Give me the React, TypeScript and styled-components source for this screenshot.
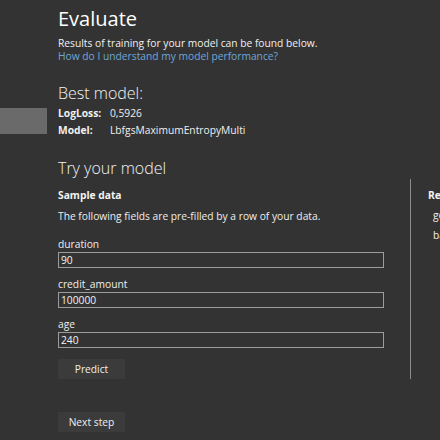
import React from "react";
import styled, { createGlobalStyle } from "styled-components";

const GlobalStyle = createGlobalStyle`
  html, body {
    margin: 0;
    padding: 0;
    background: #333333;
    overflow: hidden;
  }
  body {
    font-family: "Open Sans", "Noto Sans", sans-serif;
    color: #f2f2f2;
  }
`;

const fields = [
  { name: "duration", value: "90" },
  { name: "credit_amount", value: "100000" },
  { name: "age", value: "240" },
];

const App = () => {
  return (
    <>
      <GlobalStyle />
      <Page>
        <Sidebar>
          <NavItem $selected />
        </Sidebar>
        <Main>
          <Title>Evaluate</Title>
          <Body>Results of training for your model can be found below.</Body>
          <Link>How do I understand my model performance?</Link>

          <SubTitle $top={19}>Best model:</SubTitle>
          <Metrics>
            <MetricLabel>LogLoss:</MetricLabel>
            <Body>0,5926</Body>
            <MetricLabel>Model:</MetricLabel>
            <Body>LbfgsMaximumEntropyMulti</Body>
          </Metrics>

          <SubTitle $top={20}>Try your model</SubTitle>
          <Columns>
            <Form>
              <Strong>Sample data</Strong>
              <Note>The following fields are pre-filled by a row of your data.</Note>
              <Fields>
                {fields.map((f) => (
                  <Field key={f.name}>
                    <FieldLabel>{f.name}</FieldLabel>
                    <Input defaultValue={f.value} />
                  </Field>
                ))}
              </Fields>
              <Button>Predict</Button>
            </Form>
            <Divider />
            <Results>
              <Strong>Results</Strong>
              <ResultRow>good</ResultRow>
              <ResultRow>bad</ResultRow>
            </Results>
          </Columns>
          <NextButton>Next step</NextButton>
        </Main>
      </Page>
    </>
  );
};

const Page = styled.div`
  display: flex;
  width: 440px;
  height: 440px;
  background: #333333;
  overflow: hidden;
`;

const Sidebar = styled.div`
  width: 47px;
  flex-shrink: 0;
  display: flex;
  flex-direction: column;
  padding-top: 108px;
`;

const NavItem = styled.div<{ $selected: boolean }>`
  height: 26px;
  background: ${(p) => (p.$selected ? "#6a6a6a" : "transparent")};
`;

const Main = styled.div`
  flex: 1;
  display: flex;
  flex-direction: column;
  padding: 6px 0 0 11px;
  min-width: 0;
`;

const Title = styled.h1`
  margin: 0 0 5px;
  font-size: 20px;
  line-height: 26px;
  font-weight: 400;
  color: #ffffff;
`;

const Body = styled.div`
  font-size: 10.25px;
  line-height: 13px;
  color: #f0f0f0;
  white-space: nowrap;
`;

const Link = styled.a`
  font-size: 10.25px;
  line-height: 13px;
  color: #6ea6d8;
  white-space: nowrap;
  cursor: pointer;
`;

const SubTitle = styled.h2<{ $top: number }>`
  margin: ${(p) => p.$top}px 0 0;
  font-size: 16px;
  line-height: 22px;
  font-weight: 300;
  color: #f4f4f4;
`;

const Metrics = styled.div`
  display: grid;
  grid-template-columns: 52px auto;
  row-gap: 4px;
  margin-top: 3px;
  justify-items: start;
`;

const MetricLabel = styled.div`
  font-size: 10.25px;
  line-height: 13px;
  font-weight: 700;
  color: #f0f0f0;
`;

const Columns = styled.div`
  display: flex;
  align-items: stretch;
`;

const Form = styled.div`
  width: 326px;
  flex-shrink: 0;
  display: flex;
  flex-direction: column;
  align-items: flex-start;
  padding-top: 9px;
`;

const Strong = styled.div`
  font-size: 10.25px;
  line-height: 14px;
  font-weight: 700;
  color: #f2f2f2;
  white-space: nowrap;
`;

const Note = styled.div`
  margin-top: 7px;
  font-size: 10.25px;
  line-height: 14px;
  color: #eeeeee;
  white-space: nowrap;
`;

const Fields = styled.div`
  display: flex;
  flex-direction: column;
  gap: 9px;
  margin-top: 14px;
`;

const Field = styled.div`
  display: flex;
  flex-direction: column;
`;

const FieldLabel = styled.label`
  font-size: 10.25px;
  line-height: 15px;
  color: #eeeeee;
`;

const Input = styled.input`
  box-sizing: border-box;
  width: 326px;
  height: 16px;
  margin: 0;
  padding: 0 2px;
  border: 1px solid #9c9c9c;
  background: #333333;
  color: #f4f4f4;
  font-family: inherit;
  font-size: 10.25px;
  outline: none;
`;

const Button = styled.button`
  width: 67px;
  height: 20px;
  margin-top: 11px;
  padding: 0;
  border: none;
  background: #3b3b3b;
  color: #eeeeee;
  font-family: inherit;
  font-size: 10.25px;
`;

const NextButton = styled(Button)`
  margin-top: 33px;
`;

const Divider = styled.div`
  width: 1px;
  flex-shrink: 0;
  margin-left: 26px;
  background: #8c8c8c;
`;

const Results = styled.div`
  display: flex;
  flex-direction: column;
  padding: 9px 0 0 17px;
  gap: 7px;
`;

const ResultRow = styled.div`
  padding-left: 5px;
  font-size: 10.25px;
  line-height: 13px;
  color: #eeeeee;
`;

export default App;
